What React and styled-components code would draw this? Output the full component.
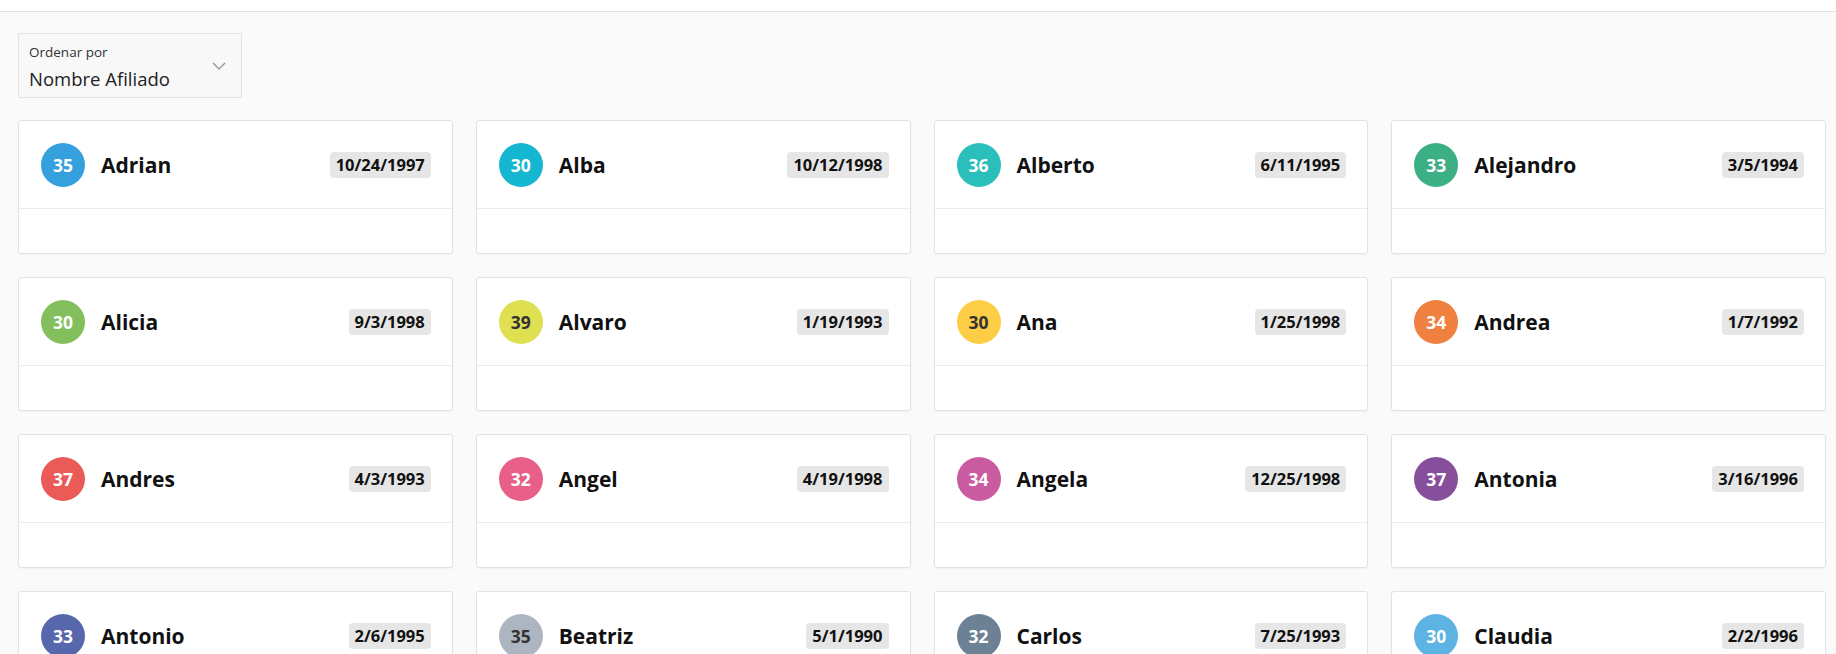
import React from "react";
import styled, { createGlobalStyle } from "styled-components";

const GlobalStyle = createGlobalStyle`
  body {
    margin: 0;
    background: #fafafa;
    font-family: "Open Sans", "Noto Sans", sans-serif;
    color: #111;
  }
`;

const afiliados = [
  { nombre: "Adrian", edad: 35, fecha: "10/24/1997", color: "#35a0de" },
  { nombre: "Alba", edad: 30, fecha: "10/12/1998", color: "#14b6d0" },
  { nombre: "Alberto", edad: 36, fecha: "6/11/1995", color: "#2bbfbb" },
  { nombre: "Alejandro", edad: 33, fecha: "3/5/1994", color: "#3caf84" },
  { nombre: "Alicia", edad: 30, fecha: "9/3/1998", color: "#83bf5d" },
  { nombre: "Alvaro", edad: 39, fecha: "1/19/1993", color: "#dfdf52", dark: true },
  { nombre: "Ana", edad: 30, fecha: "1/25/1998", color: "#fccd45", dark: true },
  { nombre: "Andrea", edad: 34, fecha: "1/7/1992", color: "#ef8040" },
  { nombre: "Andres", edad: 37, fecha: "4/3/1993", color: "#ea5a56" },
  { nombre: "Angel", edad: 32, fecha: "4/19/1998", color: "#e85f8a" },
  { nombre: "Angela", edad: 34, fecha: "12/25/1998", color: "#cb5ba0" },
  { nombre: "Antonia", edad: 37, fecha: "3/16/1996", color: "#874f9b" },
  { nombre: "Antonio", edad: 33, fecha: "2/6/1995", color: "#5767ab" },
  { nombre: "Beatriz", edad: 35, fecha: "5/1/1990", color: "#adb6c0", dark: true },
  { nombre: "Carlos", edad: 32, fecha: "7/25/1993", color: "#6c8193" },
  { nombre: "Claudia", edad: 30, fecha: "2/2/1996", color: "#5db4e3" },
];

const App = () => {
  return (
    <>
      <GlobalStyle />
      <TopBar />
      <Content>
        <SortSelect>
          <SortText>
            <SortLabel>Ordenar por</SortLabel>
            <SortValue>Nombre Afiliado</SortValue>
          </SortText>
          <svg width="14" height="8" viewBox="0 0 14 8" fill="none">
            <path d="M1 1l6 6 6-6" stroke="#8a8a8a" strokeWidth="1.2" />
          </svg>
        </SortSelect>
        <Grid>
          {afiliados.map((a) => (
            <Card key={a.nombre}>
              <CardHeader>
                <Avatar $color={a.color} $dark={a.dark}>
                  {a.edad}
                </Avatar>
                <Name>{a.nombre}</Name>
                <DateBadge>{a.fecha}</DateBadge>
              </CardHeader>
              <CardBody />
            </Card>
          ))}
        </Grid>
      </Content>
    </>
  );
};

const TopBar = styled.div`
  height: 11px;
  background: #ffffff;
  border-bottom: 1px solid #e2e2e2;
`;

const Content = styled.div`
  padding: 21px 10px 0 18px;
  display: flex;
  flex-direction: column;
  gap: 22px;
`;

const SortSelect = styled.div`
  width: 224px;
  height: 65px;
  box-sizing: border-box;
  border: 1px solid #e2e2e2;
  border-radius: 2px;
  background: #f8f8f8;
  display: flex;
  align-items: center;
  justify-content: space-between;
  padding: 0 15px 0 10px;
`;

const SortText = styled.div`
  align-self: flex-start;
  display: flex;
  flex-direction: column;
  padding-top: 9px;
`;

const SortLabel = styled.span`
  font-size: 13.5px;
  line-height: 18px;
  color: #333;
`;

const SortValue = styled.span`
  margin-top: 6px;
  font-size: 18.5px;
  line-height: 24px;
  color: #222;
`;

const Grid = styled.div`
  display: grid;
  grid-template-columns: repeat(4, 1fr);
  column-gap: 23px;
  row-gap: 23px;
`;

const Card = styled.div`
  background: #ffffff;
  border: 1px solid #e2e2e2;
  border-radius: 3px;
  box-shadow: 0 1px 2px rgba(0, 0, 0, 0.04);
`;

const CardHeader = styled.div`
  height: 87px;
  display: flex;
  align-items: center;
  padding: 0 21px 0 22px;
  border-bottom: 1px solid #ececec;
`;

const CardBody = styled.div`
  height: 44px;
`;

const Avatar = styled.div`
  width: 44px;
  height: 44px;
  border-radius: 50%;
  flex-shrink: 0;
  background: ${(p) => p.$color};
  color: ${(p) => (p.$dark ? "#333" : "#fff")};
  display: flex;
  align-items: center;
  justify-content: center;
  font-size: 17.5px;
  font-weight: 700;
`;

const Name = styled.div`
  flex: 1;
  margin-left: 16px;
  font-size: 21px;
  font-weight: 700;
  color: #111;
`;

const DateBadge = styled.span`
  background: #e6e6e6;
  border-radius: 4px;
  padding: 3px 6px;
  font-size: 16.5px;
  line-height: 20px;
  font-weight: 700;
  color: #111;
`;

export default App;
